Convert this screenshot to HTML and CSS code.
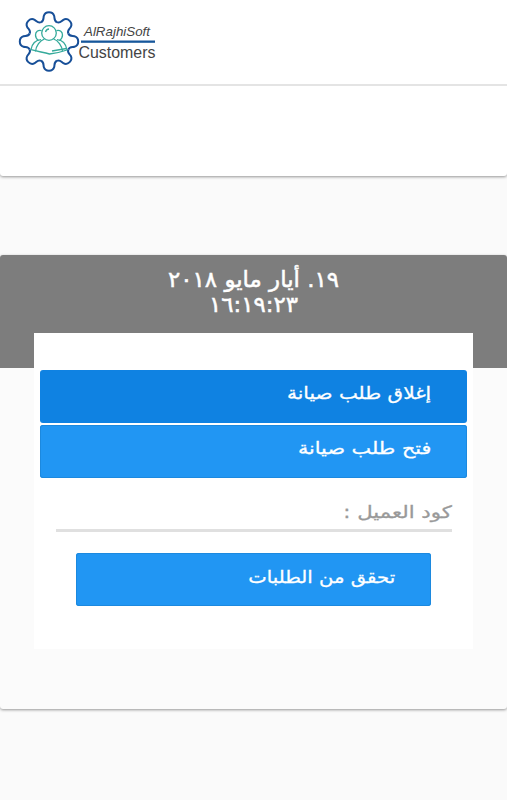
FILE: index.html
```html
<!DOCTYPE html>
<html lang="ar" dir="rtl">
<head>
  <meta charset="UTF-8" />
  <meta name="viewport" content="width=device-width, initial-scale=1.0" />
  <title>AlRajhiSoft Customers</title>
  <link rel="stylesheet" href="styles.css">
</head>
<body>
  <header class="navbar">
    <svg class="logo" viewBox="0 0 160 84" width="160" height="84" direction="ltr">
      <defs>
        <path id="tooth" d="M-8-19.300C-4.800-20.600-5.800-23.300-5.200-25.500C-4.400-28.200-2.300-29.200 0-29.200S4.400-28.200 5.200-25.500C5.800-23.300 4.800-20.600 8-19.300" />
      </defs>
      <g class="gear" transform="translate(49 41.500)">
        <use href="#tooth" />
        <use href="#tooth" transform="rotate(45)" />
        <use href="#tooth" transform="rotate(90)" />
        <use href="#tooth" transform="rotate(135)" />
        <use href="#tooth" transform="rotate(180)" />
        <use href="#tooth" transform="rotate(225)" />
        <use href="#tooth" transform="rotate(270)" />
        <use href="#tooth" transform="rotate(315)" />
      </g>
      <g class="people">
        <circle cx="49" cy="33" r="7.300" />
        <path d="M45.500 32q.8-2.800 3.500-3" />
        <path d="M41.500 30.600c-3.500-1-6 1.400-6 4.400 0 2.200 1 4 3 5.500M56.500 30.600c3.500-1 6 1.400 6 4.400 0 2.200-1 4-3 5.500" />
        <path d="M44.500 39c-4.500 1.500-8.500 6.500-9 12.500M53.500 39c4.500 1.500 8.500 6.500 9 12.300" />
        <path d="M41 39.600c-5.500.4-9 4.400-10 10 6.500 1.800 12 2.700 18.500 4.400 6-.8 12-2 17.500-4-1-6-4.500-10-10-10.400" />
        <path d="M52 51l14.500-2.500" />
      </g>
      <text class="logo-top" x="84" y="36" textLength="66" lengthAdjust="spacingAndGlyphs">AlRajhiSoft</text>
      <rect class="logo-line" x="81" y="40.500" width="74" height="2.300" />
      <text class="logo-bottom" x="78.500" y="58" textLength="77" lengthAdjust="spacingAndGlyphs">Customers</text>
    </svg>
  </header>

  <section class="toolbar"></section>

  <main class="card">
    <div class="clock">
      <p class="date">١٩. أيار مايو ٢٠١٨</p>
      <p class="time">١٦:١٩:٢٣</p>
    </div>
    <div class="panel">
      <button class="btn active"><span class="label close-label">إغلاق طلب صيانة</span></button>
      <button class="btn"><span class="label open-label">فتح طلب صيانة</span></button>
      <form class="check-form">
        <label class="field"><span class="label field-label">كود العميل :</span></label>
        <button type="button" class="btn submit"><span class="label submit-label">تحقق من الطلبات</span></button>
      </form>
    </div>
  </main>
</body>
</html>
```

FILE: styles.css
```css
* {
  margin: 0;
  padding: 0;
  box-sizing: border-box;
}

body {
  font-family: "DejaVu Sans", sans-serif;
  background-color: #fafafa;
  height: 800px;
  overflow: hidden;
}

.navbar {
  display: flex;
  justify-content: flex-end;
  height: 86px;
  background-color: white;
  border-bottom: 2px solid #e4e4e4;
}

.gear,
.people {
  fill: none;
  stroke: #174f98;
  stroke-width: 2;
}

.people {
  stroke: #35aa9b;
  stroke-width: 1.3;
}

.logo text {
  font-family: "Liberation Sans", Arial, sans-serif;
  fill: #444;
}

.logo-top {
  font-size: 13.5px;
  font-style: italic;
}

.logo-bottom {
  font-size: 16px;
}

.logo-line {
  fill: #17579b;
}

.toolbar {
  height: 90px;
  background-color: white;
  border-radius: 0 0 3px 3px;
  box-shadow: 0 1px 3px rgba(0, 0, 0, 0.4);
  clip-path: inset(0 0 -6px 0);
}

.card {
  height: 454px;
  margin-top: 79px;
  background-color: #fbfbfb;
  border-radius: 3px;
  box-shadow: 0 1px 3px rgba(0, 0, 0, 0.4);
  overflow: hidden;
}

.clock {
  height: 113px;
  padding-top: 12px;
  background-color: #7d7d7d;
  color: white;
  text-align: center;
  font-size: 22px;
  line-height: 25px;
  -webkit-text-stroke: 0.5px white;
}

.date,
.time {
  transform: scaleX(1.04);
}

.panel {
  position: relative;
  display: flex;
  flex-direction: column;
  gap: 2px;
  height: 316px;
  margin: -35.5px 34px 0;
  padding: 37px 6px 0 5.5px;
  background-color: white;
}

.btn {
  flex: none;
  height: 53px;
  padding: 0 36px 6px;
  border: none;
  border-radius: 3px;
  background-color: #2196f3;
  box-shadow: inset 0 0 0 1px #1c89df;
  color: white;
  font-family: inherit;
  font-size: 17px;
  text-align: right;
}

.btn.active {
  background-color: #0f82e2;
  box-shadow: none;
}

/* wide lettering for the labels */
.label {
  display: inline-block;
  transform-origin: right;
  -webkit-text-stroke: 0.3px currentColor;
}

.close-label {
  transform: scaleX(1.18);
}

.open-label {
  transform: scaleX(1.22);
}

.field-label {
  transform: scaleX(1.25);
}

.submit-label {
  transform: scaleX(1.155);
}

.check-form {
  padding: 18.5px 15px 0 16px;
}

.field {
  display: block;
  height: 34px;
  border-bottom: 3px solid #e0e0e0;
  color: #999;
  font-size: 17px;
  line-height: 28px;
}

.submit {
  display: block;
  width: 355px;
  margin: 21px 21px 0;
}
```
